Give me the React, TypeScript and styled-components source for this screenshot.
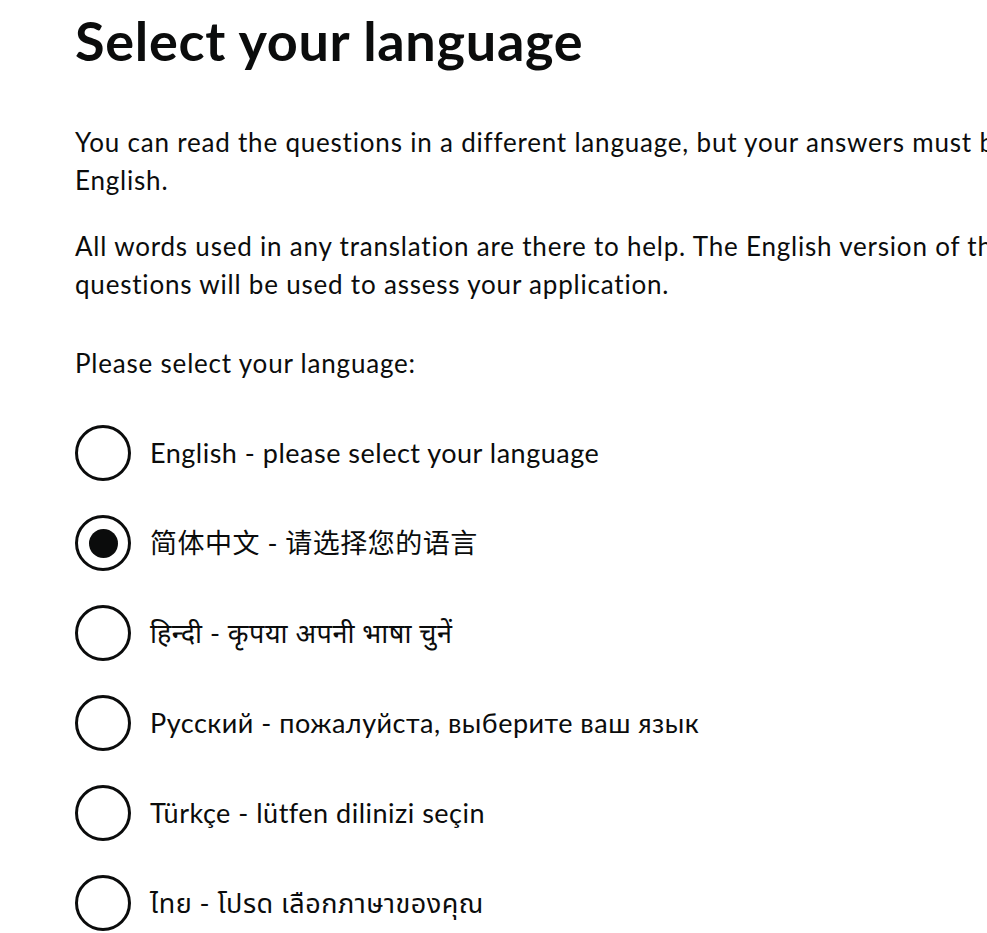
import React, { useState } from "react";
import styled, { createGlobalStyle } from "styled-components";

const Global = createGlobalStyle`
  html, body { margin: 0; padding: 0; background: #ffffff; overflow-x: hidden; }
  body { font-family: Lato, "Noto Sans", "Noto Sans CJK SC", sans-serif; color: #0b0c0c; }
`;

const Page = styled.main`
  padding-left: 75px;
  width: 1000px;
`;

const Heading = styled.h1`
  margin: 11px 0 0;
  font-size: 54px;
  line-height: 60px;
  font-weight: 700;
  letter-spacing: 0.7px;
`;

const Body = styled.p<{ $top: number }>`
  margin: ${(p) => p.$top}px 0 0;
  font-size: 26px;
  line-height: 38px;
  font-weight: 400;
  letter-spacing: 0.8px;
`;

const RadioList = styled.div`
  display: flex;
  flex-direction: column;
  gap: 34px;
  margin-top: 43px;
`;

const RadioRow = styled.label`
  display: flex;
  align-items: center;
  gap: 19px;
  cursor: pointer;
  height: 56px;
`;

const Circle = styled.span<{ $checked: boolean }>`
  box-sizing: border-box;
  flex: none;
  width: 56px;
  height: 56px;
  border: 3px solid #0b0c0c;
  border-radius: 50%;
  display: flex;
  align-items: center;
  justify-content: center;
  &::after {
    content: "";
    width: 29px;
    height: 29px;
    border-radius: 50%;
    background: #0b0c0c;
    display: ${(p) => (p.$checked ? "block" : "none")};
  }
`;

const HiddenInput = styled.input`
  position: absolute;
  opacity: 0;
  width: 0;
  height: 0;
`;

const LabelText = styled.span`
  font-size: 27px;
  line-height: 38px;
  letter-spacing: 0.5px;
  font-family: Lato, "Noto Sans", "Noto Sans CJK SC", "Noto Sans Devanagari", "Noto Sans Thai", sans-serif;
`;

const options = [
  "English - please select your language",
  "简体中文 - 请选择您的语言",
  "हिन्दी - कृपया अपनी भाषा चुनें",
  "Русский - пожалуйста, выберите ваш язык",
  "Türkçe - lütfen dilinizi seçin",
  "ไทย - โปรด เลือกภาษาของคุณ",
];

export default function App() {
  const [sel, setSel] = useState(1);
  return (
    <Page>
      <Global />
      <Heading>Select your language</Heading>
      <Body $top={52}>
        You can read the questions in a different language, but your answers must be in English.
      </Body>
      <Body $top={28}>
        All words used in any translation are there to help. The English version of these questions will be used to assess your application.
      </Body>
      <Body $top={41}>Please select your language:</Body>
      <RadioList>
        {options.map((o, i) => (
          <RadioRow key={i}>
            <HiddenInput type="radio" name="lang" checked={sel === i} onChange={() => setSel(i)} />
            <Circle $checked={sel === i} />
            <LabelText>{o}</LabelText>
          </RadioRow>
        ))}
      </RadioList>
    </Page>
  );
}
